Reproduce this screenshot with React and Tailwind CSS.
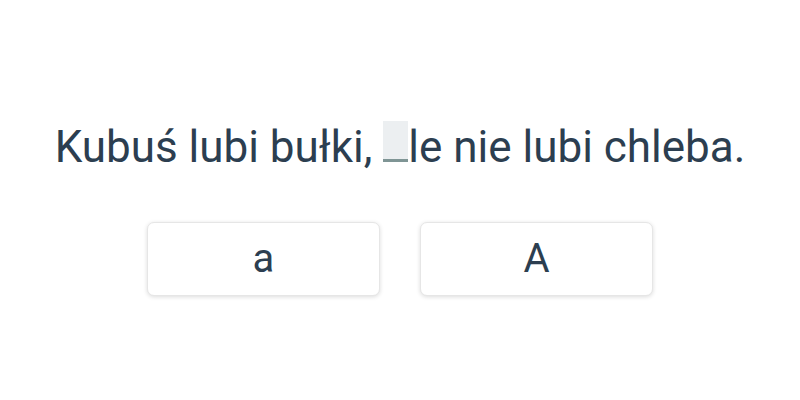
import React from 'react';

const options = ['a', 'A'];

export default function App() {
    return (
        <div className="w-[800px] h-[400px] bg-white flex flex-col items-center pt-[121px] text-[#2c3e50]" style={{ fontFamily: 'Roboto, sans-serif' }}>
            <p className="text-[44px] leading-[52px] mb-[49px] whitespace-nowrap">
                Kubuś lubi bułki,{' '}
                <span className="inline-block align-baseline w-[25px] h-[41px] bg-[#eceff1] border-b-[3px] border-[#7f9595]"></span>
                le nie lubi chleba.
            </p>
            <div className="flex gap-[40px]">
                {options.map((opt) => (
                    <button
                        key={opt}
                        type="button"
                        className="w-[233px] h-[74px] rounded-[7px] border border-[#e6e6e6] bg-white shadow-[0_1px_4px_rgba(0,0,0,0.14)] text-[40px] text-[#2c3e50]"
                    >
                        {opt}
                    </button>
                ))}
            </div>
        </div>
    );
}
